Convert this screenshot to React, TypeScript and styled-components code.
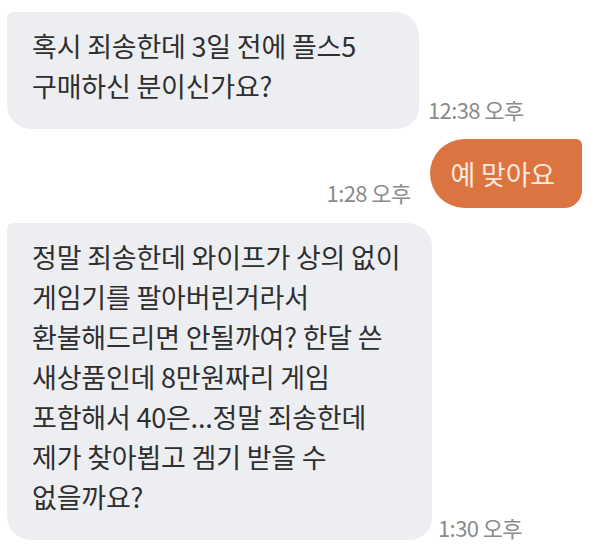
import React from "react";
import styled, { createGlobalStyle } from "styled-components";

const Global = createGlobalStyle`
  html, body { margin: 0; padding: 0; background: #ffffff; }
  body { font-family: "Noto Sans CJK KR", "Noto Sans", sans-serif; }
`;

const Chat = styled.div`
  width: 595px;
  height: 547px;
  box-sizing: border-box;
  padding: 12px 13px 0 7px;
  display: flex;
  flex-direction: column;
  overflow: hidden;
`;

const Row = styled.div<{ $mine?: boolean; $gap: number; $top: number }>`
  display: flex;
  align-items: flex-end;
  justify-content: ${(p) => (p.$mine ? "flex-end" : "flex-start")};
  gap: ${(p) => p.$gap}px;
  margin-top: ${(p) => p.$top}px;
`;

const Bubble = styled.div<{ $w: number }>`
  width: ${(p) => p.$w}px;
  flex-shrink: 0;
  box-sizing: border-box;
  background: #edeef2;
  border-radius: 6px 24px 22px 24px;
  padding: 14px 0 23px 25px;
  font-size: 27px;
  line-height: 40px;
  color: #2f2f2f;
  letter-spacing: -0.2px;
  white-space: nowrap;
`;

const MyBubble = styled.div`
  height: 69px;
  box-sizing: border-box;
  background: #dc7441;
  border-radius: 35px 6px 18px 35px;
  padding: 0 27px 0 21px;
  display: flex;
  align-items: center;
  font-size: 27px;
  color: #f8e9dc;
  letter-spacing: -0.2px;
`;

const Time = styled.div<{ $bottom: number }>`
  font-size: 22px;
  line-height: 26px;
  color: #8b8b8b;
  padding-bottom: ${(p) => p.$bottom}px;
  white-space: nowrap;
  letter-spacing: -0.6px;
`;

export default function App() {
  return (
    <>
      <Global />
      <Chat>
        <Row $gap={9} $top={0}>
          <Bubble $w={412}>
            혹시 죄송한데 3일 전에 플스5
            <br />
            구매하신 분이신가요?
          </Bubble>
          <Time $bottom={7}>12:38 오후</Time>
        </Row>
        <Row $mine $gap={19} $top={10}>
          <Time $bottom={3}>1:28 오후</Time>
          <MyBubble>예 맞아요</MyBubble>
        </Row>
        <Row $gap={6} $top={15}>
          <Bubble $w={425}>
            정말 죄송한데 와이프가 상의 없이
            <br />
            게임기를 팔아버린거라서
            <br />
            환불해드리면 안될까여? 한달 쓴
            <br />
            새상품인데 8만원짜리 게임
            <br />
            포함해서 40은...정말 죄송한데
            <br />
            제가 찾아뵙고 겜기 받을 수
            <br />
            없을까요?
          </Bubble>
          <Time $bottom={0}>1:30 오후</Time>
        </Row>
      </Chat>
    </>
  );
}
